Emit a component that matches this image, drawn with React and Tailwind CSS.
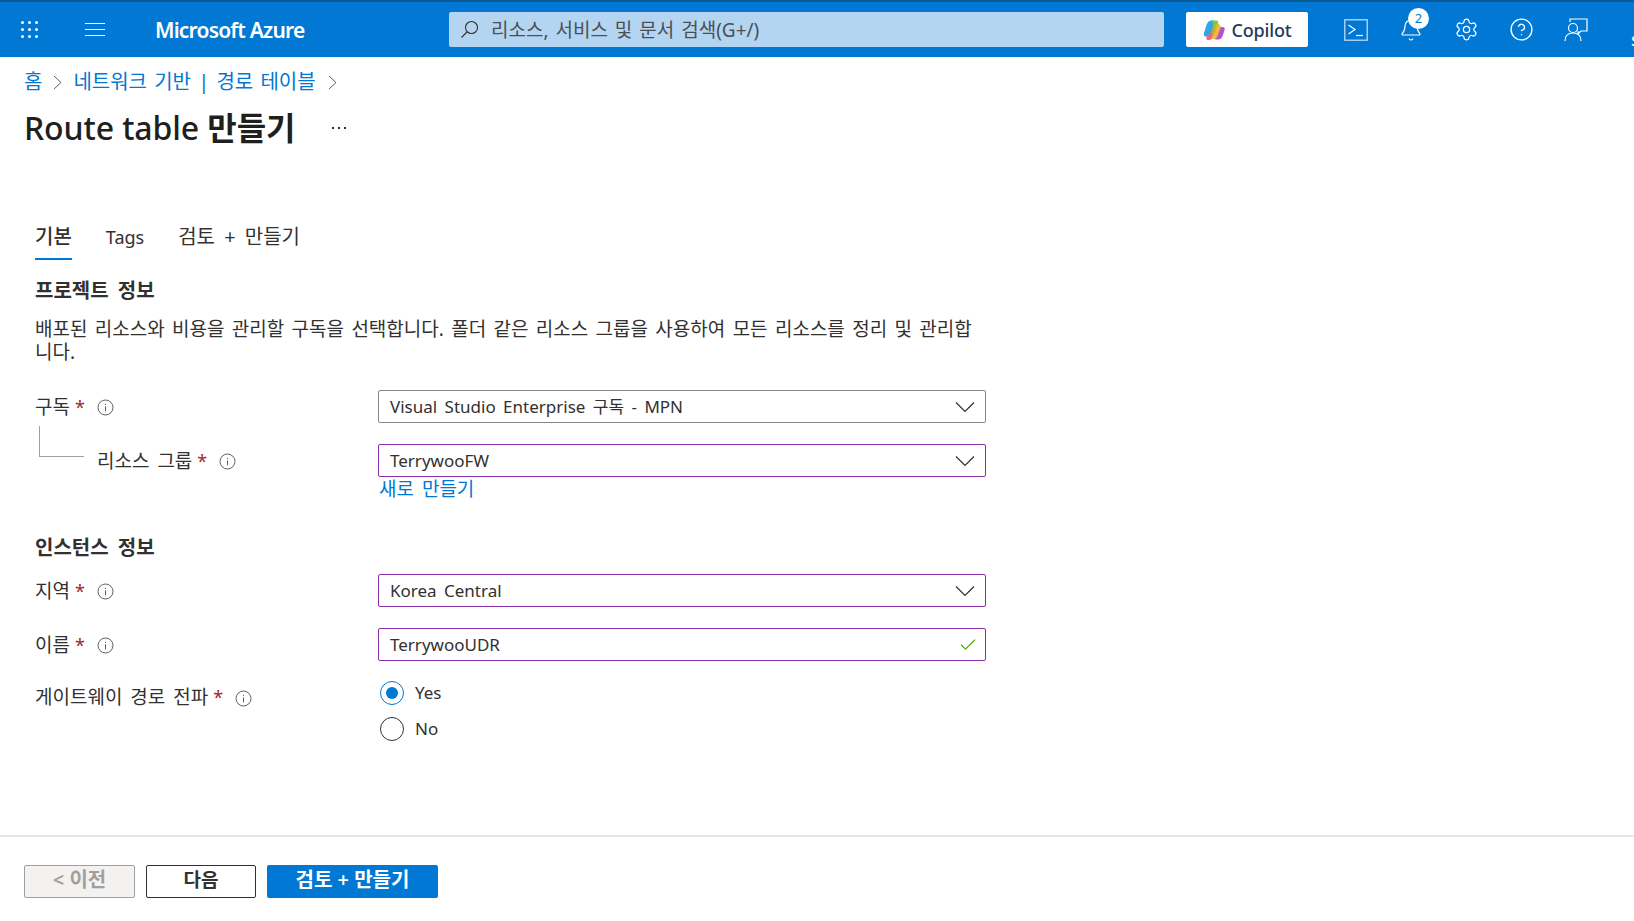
import React from "react";
import { Check, Bell, Settings, CircleHelp } from "lucide-react";

const Info = () => (
  <svg width="17" height="17" viewBox="0 0 17 17" fill="none" className="shrink-0">
    <circle cx="8.5" cy="8.5" r="7.5" stroke="#605e5c" strokeWidth="1" />
    <rect x="8" y="7.4" width="1" height="5" fill="#605e5c" />
    <rect x="8" y="4.8" width="1" height="1.2" fill="#605e5c" />
  </svg>
);

const Chevron = () => (
  <svg width="20" height="12" viewBox="0 0 20 12" fill="none" stroke="#323130" strokeWidth="1.2">
    <path d="M1 1.5 L10 10.5 L19 1.5" />
  </svg>
);

const Crumb = ({ className }) => (
  <svg width="9" height="15" viewBox="0 0 9 15" fill="none" stroke="#605e5c" strokeWidth="1" className={className}>
    <path d="M1 1 L8 7.5 L1 14" />
  </svg>
);

const Label = ({ text }) => (
  <div className="flex items-center">
    <span className="text-[19px] leading-[24px] text-[#323130] [word-spacing:3px]">{text}</span>
    <span className="ml-[5px] text-[18px] leading-[24px] text-[#a4262c]">*</span>
    <span className="ml-[12px] mt-[2px]">
      <Info />
    </span>
  </div>
);

const Select = ({ value, active }) => (
  <div
    className={
      active
        ? "flex h-[33px] w-[608px] items-center justify-between rounded-[2px] border border-[#8a2da8] pl-[11px] pr-[10px]"
        : "flex h-[33px] w-[608px] items-center justify-between rounded-[2px] border border-[#8a8886] pl-[11px] pr-[10px]"
    }
  >
    <span className="text-[17px] leading-[24px] text-[#323130] [word-spacing:3px]">{value}</span>
    <Chevron />
  </div>
);

const Header = () => (
  <header className="relative flex h-[57px] shrink-0 items-center overflow-hidden border-t-2 border-[#0b5a91] bg-[#0078d4] text-white">
    <div className="ml-[21px] grid grid-cols-3 gap-[4px]">
      {[1, 2, 3, 4, 5, 6, 7, 8, 9].map((i) => (
        <span key={i} className="h-[3px] w-[3px] rounded-full bg-white" />
      ))}
    </div>
    <div className="ml-[47px] flex w-[20px] flex-col gap-[5px]">
      <span className="h-px bg-white" />
      <span className="h-px bg-white" />
      <span className="h-px bg-white" />
    </div>
    <div className="ml-[50px] w-[294px] text-[21px] font-semibold leading-[28px] tracking-[-0.8px]">Microsoft Azure</div>
    <div className="flex h-[35px] w-[715px] items-center rounded-[2px] bg-[#b3d5f2] pl-[11px]">
      <svg width="19" height="19" viewBox="0 0 19 19" fill="none" stroke="#323130" strokeWidth="1.1">
        <circle cx="11.5" cy="7.5" r="6" />
        <path d="M7 12 L1.5 17.5" />
      </svg>
      <span className="ml-[12px] text-[19px] leading-[24px] text-[#4a4f55] [word-spacing:2px]">리소스, 서비스 및 문서 검색(G+/)</span>
    </div>
    <div className="ml-[22px] flex h-[35px] w-[122px] items-center justify-center gap-[7px] rounded-[2px] bg-white">
      <svg width="22" height="22" viewBox="0 0 22 22">
        <path d="M8 1.5 h4 l-4 13 q-1 3 -4 3 h-1 q-3 0 -2 -3.5 l2.5 -8 q1.5 -4.5 4.5 -4.5z" fill="#2aa8e8" />
        <path d="M3 17.5 q3 0 4 -3 l2 -6 q1 -3 4 -3 l-3 11 q-1 4.5 -4 4.5 h-2z" fill="#f0686e" />
        <path d="M12 20.5 h3 q3.5 0 5 -4.5 l1.5 -5 q1 -3 -2 -3 h-2 z" fill="#b64fd8" />
        <path d="M8 1.5 h5 q3 0 2 3 l-2.5 8 q-1 3 -4 2.5 l2.5 -10z" fill="#8bc63f" />
        <path d="M10 16 l3 -10 q1 -2 3 -1 l2 3 -3 9 q-1 3 -3 3 h-3z" fill="#e8b020" opacity="0.85" />
      </svg>
      <span className="text-[18px] font-medium leading-[24px] tracking-[-0.2px] text-[#243a5e]">Copilot</span>
    </div>
    <div className="ml-[35px] flex h-[35px] w-[26px] items-center justify-center">
      <svg width="24" height="22" viewBox="0 0 24 22" fill="none" stroke="#ffffff" strokeWidth="1.2">
        <rect x="0.8" y="0.8" width="22.4" height="20.4" stroke="#cfe4f6" />
        <path d="M4.5 6 L11 10.5 L4.5 15" />
        <path d="M12 16.5 H19" />
      </svg>
    </div>
    <div className="relative ml-[29px] flex w-[26px] justify-center">
      <Bell size={24} strokeWidth={1.2} />
      <span className="absolute left-[10px] top-[-10px] flex h-[21px] w-[21px] items-center justify-center rounded-full bg-white text-[13px] leading-none text-[#0078d4]">
        2
      </span>
    </div>
    <div className="ml-[29px] flex w-[26px] justify-center">
      <Settings size={25} strokeWidth={1.2} />
    </div>
    <div className="ml-[29px] flex w-[26px] justify-center">
      <CircleHelp size={25} strokeWidth={1.3} />
    </div>
    <div className="ml-[29px] flex w-[26px] justify-center">
      <svg width="24" height="24" viewBox="0 0 24 24" fill="none" stroke="#ffffff" strokeWidth="1.2">
        <path d="M6 4 V1 H23 V13 H17 L14 16 V13" />
        <circle cx="9" cy="10" r="4.5" />
        <path d="M1 23 q0 -8 8 -8 q8 0 8 8" />
      </svg>
    </div>
    <span className="absolute right-[-5px] top-[30px] text-[14px] font-semibold leading-[18px]">S</span>
  </header>
);

const Breadcrumb = () => (
  <nav className="flex h-[24px] items-center pt-[1px] text-[20px] leading-[24px] text-[#0078d4] [word-spacing:2px]">
    <span>홈</span>
    <Crumb className="ml-[11px] mr-[11px] mt-[2px]" />
    <span>네트워크 기반 | 경로 테이블</span>
    <Crumb className="ml-[12px] mt-[2px]" />
  </nav>
);

export default function App() {
  return (
    <div className="flex h-[921px] flex-col overflow-hidden bg-white font-['Noto_Sans','Noto_Sans_CJK_KR',sans-serif]">
      <Header />
      <main className="flex-1 pl-[24px] pt-[12px]">
        <Breadcrumb />
        <div className="mt-[14px] flex items-center">
          <h1 className="text-[32px] leading-[42px] tracking-[-0.1px] text-[#201f1e]">
            <span className="font-medium">Route table</span> <span className="font-semibold">만들기</span>
          </h1>
          <span className="ml-[37px] flex gap-[4px]">
            <span className="h-[2px] w-[2px] bg-[#323130]" />
            <span className="h-[2px] w-[2px] bg-[#323130]" />
            <span className="h-[2px] w-[2px] bg-[#323130]" />
          </span>
        </div>
        <div className="ml-[11px] w-[951px]">
          <div className="mt-[75px] flex h-[38px] gap-[34px] text-[20px] leading-[26px] text-[#323130] [word-spacing:4px]">
            <span className="h-[36px] border-b-2 border-[#0078d4] font-medium">기본</span>
            <span className="text-[18px]">Tags</span>
            <span>검토 + 만들기</span>
          </div>
          <h2 className="mt-[17px] text-[20px] font-semibold leading-[24px] text-[#323130] [word-spacing:4px]">프로젝트 정보</h2>
          <p className="mt-[15px] text-[19px] leading-[23px] text-[#323130] [word-spacing:2.4px]">
            배포된 리소스와 비용을 관리할 구독을 선택합니다. 폴더 같은 리소스 그룹을 사용하여 모든 리소스를 정리 및 관리합니다.
          </p>
          <div className="mt-[26px] flex items-center">
            <div className="w-[343px]">
              <Label text="구독" />
            </div>
            <Select value="Visual Studio Enterprise 구독 - MPN" />
          </div>
          <div className="mt-[21px] flex items-center">
            <div className="relative w-[343px] pl-[62px]">
              <span className="absolute left-[4px] top-[-23px] h-[31px] w-[45px] border-b border-l border-[#a19f9d]" />
              <Label text="리소스 그룹" />
            </div>
            <Select value="TerrywooFW" active />
          </div>
          <a className="ml-[344px] mt-[1px] block text-[19px] leading-[23px] text-[#0078d4] [word-spacing:3px]">새로 만들기</a>
          <h2 className="mt-[35px] text-[20px] font-semibold leading-[24px] text-[#323130] [word-spacing:4px]">인스턴스 정보</h2>
          <div className="mt-[14px] flex items-center">
            <div className="w-[343px]">
              <Label text="지역" />
            </div>
            <Select value="Korea Central" active />
          </div>
          <div className="mt-[21px] flex items-center">
            <div className="w-[343px]">
              <Label text="이름" />
            </div>
            <div className="flex h-[33px] w-[608px] items-center justify-between rounded-[2px] border border-[#8a2da8] pl-[11px] pr-[7px]">
              <span className="text-[17px] leading-[24px] text-[#323130]">TerrywooUDR</span>
              <Check size={20} strokeWidth={1.4} color="#57a300" />
            </div>
          </div>
          <div className="mt-[20px] flex">
            <div className="w-[343px] pt-[4px]">
              <Label text="게이트웨이 경로 전파" />
            </div>
            <div className="ml-[2px] flex flex-col gap-[12px]">
              <div className="flex items-center">
                <span className="flex h-[24px] w-[24px] items-center justify-center rounded-full border border-[#0078d4]">
                  <span className="h-[12px] w-[12px] rounded-full bg-[#0078d4]" />
                </span>
                <span className="ml-[11px] text-[17px] leading-[24px] text-[#323130]">Yes</span>
              </div>
              <div className="flex items-center">
                <span className="h-[24px] w-[24px] rounded-full border border-[#323130]" />
                <span className="ml-[11px] text-[17px] leading-[24px] text-[#323130]">No</span>
              </div>
            </div>
          </div>
        </div>
      </main>
      <footer className="flex h-[86px] shrink-0 gap-[11px] border-t-2 border-[#e6e6e6] pl-[24px] pt-[28px] text-[19px] font-semibold leading-[24px] [word-spacing:3px]">
        <button className="h-[33px] w-[111px] rounded-[2px] border border-[#a19f9d] bg-[#f3f2f1] pb-[3px] text-[20px] text-[#a19f9d]">&lt; 이전</button>
        <button className="h-[33px] w-[110px] rounded-[2px] border border-[#323130] bg-white pb-[3px] text-[#323130]">다음</button>
        <button className="h-[33px] w-[171px] rounded-[2px] bg-[#0078d4] pb-[3px] text-[20px] text-white">검토 + 만들기</button>
      </footer>
    </div>
  );
}
